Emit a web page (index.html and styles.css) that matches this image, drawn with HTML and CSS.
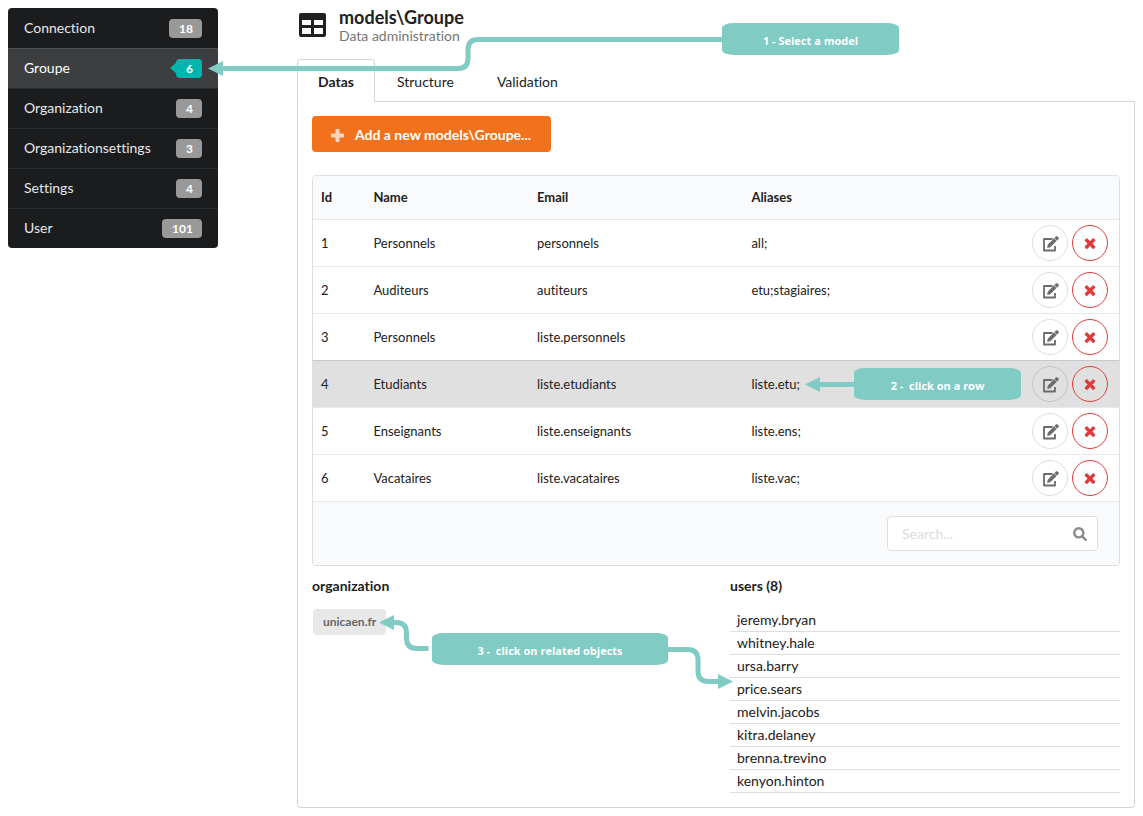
FILE: index.html
```html
<!DOCTYPE html>
<html lang="en">
<head>
<meta charset="utf-8">
<title>Data administration</title>
<link rel="stylesheet" href="styles.css">
</head>
<body>
<svg class="defs" aria-hidden="true">
  <symbol id="edit" viewBox="0 0 16 16"><path d="M9.500 3H1V14.500H12V10" fill="none" stroke="currentColor" stroke-width="1.800" stroke-linejoin="round"/><path d="M5.200 8.600L11 2.800L13.200 5L7.400 10.800L4.600 11.400ZM11.700 2.100L13 .800Q13.700 .200 14.400 .800L15.200 1.600Q15.800 2.300 15.200 3L13.900 4.300Z" fill="currentColor" stroke="currentColor" stroke-width=".8"/></symbol>
  <symbol id="remove" viewBox="0 0 1792 1792"><path d="M1490 1322q0 40-28 68l-136 136q-28 28-68 28t-68-28l-294-294-294 294q-28 28-68 28t-68-28l-136-136q-28-28-28-68t28-68l294-294-294-294q-28-28-28-68t28-68l136-136q28-28 68-28t68 28l294 294 294-294q28-28 68-28t68 28l136 136q28 28 28 68t-28 68l-294 294 294 294q28 28 28 68z"/></symbol>
</svg>
<div class="page">
  <nav class="menu">
    <a class="item" href="#connection">Connection <span class="count">18</span></a>
    <a class="item active" href="#groupe">Groupe <span class="count pointing">6</span></a>
    <a class="item" href="#organization">Organization <span class="count">4</span></a>
    <a class="item" href="#organizationsettings">Organizationsettings <span class="count">3</span></a>
    <a class="item" href="#settings">Settings <span class="count">4</span></a>
    <a class="item" href="#user">User <span class="count">101</span></a>
  </nav>
  <main class="main">
    <header class="header">
      <svg class="table-icon" viewBox="0 0 27 24"><path fill-rule="evenodd" d="M2 0h23a2 2 0 0 1 2 2v20a2 2 0 0 1-2 2H2a2 2 0 0 1-2-2V2a2 2 0 0 1 2-2zM3 7v5h9V7zM15 7v5h9V7zM3 15v6h9v-6zM15 15v6h9v-6z"/></svg>
      <div>
        <h1 class="title">models\Groupe</h1>
        <p class="subtitle">Data administration</p>
      </div>
    </header>
    <div class="tabs" role="tablist">
      <button class="tab selected" role="tab" aria-selected="true">Datas</button>
      <button class="tab" role="tab" aria-selected="false">Structure</button>
      <button class="tab" role="tab" aria-selected="false">Validation</button>
    </div>
    <section class="panel">
      <button class="add"><svg class="plus" viewBox="0 0 13 13"><path d="M5.500 0h2a1 1 0 0 1 1 1v3.500H12a1 1 0 0 1 1 1v2a1 1 0 0 1-1 1H8.500V12a1 1 0 0 1-1 1h-2a1 1 0 0 1-1-1V8.500H1a1 1 0 0 1-1-1v-2a1 1 0 0 1 1-1h3.500V1a1 1 0 0 1 1-1z"/></svg>Add a new models\Groupe...</button>
      <div class="table-box">
        <table class="table">
          <colgroup><col class="col-id"><col class="col-name"><col class="col-email"><col></colgroup>
          <thead><tr><th>Id</th><th>Name</th><th>Email</th><th colspan="2">Aliases</th></tr></thead>
          <tbody>
            <tr><td>1</td><td>Personnels</td><td>personnels</td><td>all;</td><td class="actions"><button class="round" aria-label="Edit"><svg class="edit"><use href="#edit"/></svg></button><button class="round danger" aria-label="Delete"><svg class="remove"><use href="#remove"/></svg></button></td></tr>
            <tr><td>2</td><td>Auditeurs</td><td>autiteurs</td><td>etu;stagiaires;</td><td class="actions"><button class="round" aria-label="Edit"><svg class="edit"><use href="#edit"/></svg></button><button class="round danger" aria-label="Delete"><svg class="remove"><use href="#remove"/></svg></button></td></tr>
            <tr><td>3</td><td>Personnels</td><td>liste.personnels</td><td></td><td class="actions"><button class="round" aria-label="Edit"><svg class="edit"><use href="#edit"/></svg></button><button class="round danger" aria-label="Delete"><svg class="remove"><use href="#remove"/></svg></button></td></tr>
            <tr class="current"><td>4</td><td>Etudiants</td><td>liste.etudiants</td><td>liste.etu;</td><td class="actions"><button class="round" aria-label="Edit"><svg class="edit"><use href="#edit"/></svg></button><button class="round danger" aria-label="Delete"><svg class="remove"><use href="#remove"/></svg></button></td></tr>
            <tr><td>5</td><td>Enseignants</td><td>liste.enseignants</td><td>liste.ens;</td><td class="actions"><button class="round" aria-label="Edit"><svg class="edit"><use href="#edit"/></svg></button><button class="round danger" aria-label="Delete"><svg class="remove"><use href="#remove"/></svg></button></td></tr>
            <tr><td>6</td><td>Vacataires</td><td>liste.vacataires</td><td>liste.vac;</td><td class="actions"><button class="round" aria-label="Edit"><svg class="edit"><use href="#edit"/></svg></button><button class="round danger" aria-label="Delete"><svg class="remove"><use href="#remove"/></svg></button></td></tr>
          </tbody>
        </table>
        <div class="table-footer">
          <label class="search">
            <input class="search-input" type="text" placeholder="Search..." aria-label="Search">
            <svg class="search-icon" viewBox="0 0 14 14"><circle cx="5.800" cy="5.800" r="4.600"/><path d="M9.300 9.300l3.500 3.500"/></svg>
          </label>
        </div>
      </div>
      <div class="related">
        <section>
          <h2 class="related-title">organization</h2>
          <a class="tag" href="#unicaen">unicaen.fr</a>
        </section>
        <section>
          <h2 class="related-title">users (8)</h2>
          <ul class="users">
            <li><a class="user" href="#u1">jeremy.bryan</a></li>
            <li><a class="user" href="#u2">whitney.hale</a></li>
            <li><a class="user" href="#u3">ursa.barry</a></li>
            <li><a class="user" href="#u4">price.sears</a></li>
            <li><a class="user" href="#u5">melvin.jacobs</a></li>
            <li><a class="user" href="#u6">kitra.delaney</a></li>
            <li><a class="user" href="#u7">brenna.trevino</a></li>
            <li><a class="user" href="#u8">kenyon.hinton</a></li>
          </ul>
        </section>
      </div>
    </section>
  </main>
</div>
<svg class="arrows" viewBox="0 0 1143 816" aria-hidden="true">
  <path class="line" d="M722 39.500H478Q468 39.500 468 49.500V58.500Q468 68.500 458 68.500H222"/>
  <path class="head" d="M208 68.500l15-7.500v15z"/>
  <path class="line" d="M855 384.500H819"/>
  <path class="head" d="M805 384.500l15-7.500v15z"/>
  <path class="line" d="M428.500 648.500H417Q406.500 648.500 406.500 638V633Q406.500 622.500 396 622.500H393"/>
  <path class="head" d="M379 622.500l15-7.500v15z"/>
  <path class="line" d="M668 649.500H687.500Q698 649.500 698 660V671Q698 681.500 708.500 681.500H719"/>
  <path class="head" d="M733 681.500l-15-7.500v15z"/>
</svg>
<div class="callout step-one">1 - Select a model</div>
<div class="callout step-two">2 -&nbsp; click on a row</div>
<div class="callout step-three">3 -&nbsp; click on related objects</div>
</body>
</html>
```
FILE: styles.css
```css
* { box-sizing: border-box; }
body {
  margin: 0;
  position: relative;
  background: #fff;
  color: #212121;
  font: 14px/20px Lato, "Liberation Sans", sans-serif;
  font-variant-ligatures: none;
}
a { color: inherit; text-decoration: none; }
button { font: inherit; font-variant-ligatures: none; color: inherit; cursor: pointer; }
h1, h2, p, ul { margin: 0; padding: 0; }
.defs { display: none; }
.page {
  display: grid;
  grid-template-columns: 210px 1fr;
  gap: 79px;
  align-items: start;
  padding: 8px;
}

.menu { background: #1b1c1d; border-radius: 4px; overflow: hidden; }
.item {
  display: flex;
  justify-content: space-between;
  height: 40px;
  padding: 9px 16px 0;
  color: #e8e8e8;
  border-top: 1px solid #2d2e2f;
}
.item:first-child { border-top-color: transparent; }
.item.active { background: #3d3e3f; color: #fff; border-top-color: #4d4e4f; }
.count {
  position: relative;
  height: 19px;
  margin-top: 1px;
  padding: 1px 9px 0 10px;
  border-radius: 4px;
  background: #999;
  color: #fff;
  font-size: 12px;
  font-weight: 700;
  line-height: 18px;
}
.pointing { background: #00b5ad; }
.pointing::before {
  content: "";
  position: absolute;
  left: -6px;
  top: 3px;
  border: 6px solid transparent;
  border-left-width: 0;
  border-right: 7px solid #00b5ad;
}

.header { display: flex; gap: 13px; padding: 0 0 13px 2px; }
.table-icon { width: 27px; height: 24px; margin-top: 5px; fill: #212121; }
.title { font-size: 18px; line-height: 18px; font-weight: 700; }
.subtitle { line-height: 20px; color: #767676; }
.tabs { display: flex; gap: 1px; margin-bottom: -1px; }
.tab {
  height: 43px;
  padding: 2px 20px 0;
  border: 1px solid transparent;
  background: none;
}
.selected {
  position: relative;
  background: #fff;
  border-color: #d4d4d5;
  border-bottom-color: #fff;
  border-radius: 4px 4px 0 0;
  font-weight: 700;
}
.panel { padding: 14px; border: 1px solid #d4d4d5; border-radius: 0 0 4px 4px; }
.add {
  display: flex;
  align-items: center;
  gap: 11px;
  height: 36px;
  padding: 2px 20px 0 19px;
  border: 0;
  border-radius: 4px;
  background: #f2711c;
  color: #fff;
  font-weight: 700;
}
.plus { width: 13px; height: 13px; fill: #fbd5bd; }

.table-box {
  margin-top: 23px;
  border: 1px solid #dededf;
  border-radius: 4px;
  overflow: hidden;
}
.table { width: 100%; border-collapse: separate; border-spacing: 0; table-layout: fixed; font-size: 13px; }
.col-id { width: 6.5%; }
.col-name { width: 20.3%; }
.col-email { width: 26.6%; }
.table th {
  height: 44px;
  padding: 0 8px 2px;
  background: #f9fafb;
  border-bottom: 1px solid #e4e4e5;
  text-align: left;
  font-weight: 700;
}
.table td { height: 47px; padding: 0 8px; border-bottom: 1px solid #e8e8e9; }
.current td { background: #e0e0e0; box-shadow: 0 -1px #c8c8c8; }
.table .actions { text-align: right; padding-right: 11px; white-space: nowrap; }
.round {
  display: inline-flex;
  align-items: center;
  justify-content: center;
  width: 36px;
  height: 36px;
  margin-left: 4px;
  padding: 0;
  border: 1px solid rgba(34, 36, 38, 0.15);
  border-radius: 50%;
  background: none;
  color: #6b6b6b;
  vertical-align: middle;
}
.danger { border-color: #e03b3b; }
.edit { width: 16px; height: 16px; margin: 2px 0 0 2px; }
.remove { width: 16px; height: 16px; fill: #e03b3b; }
.table-footer {
  display: flex;
  justify-content: flex-end;
  padding: 14px 21px 14px 8px;
  background: #f9fafb;
}
.search { position: relative; width: 211px; }
.search-input {
  display: block;
  width: 100%;
  height: 35px;
  padding: 0 36px 1px 14px;
  border: 1px solid #dededf;
  border-radius: 4px;
  background: #fff;
  font: inherit;
}
.search-input::placeholder { color: #dcdcdc; opacity: 1; }
.search-icon {
  position: absolute;
  right: 11px;
  top: 11px;
  width: 14px;
  height: 14px;
  fill: none;
  stroke: #8b8b8b;
  stroke-width: 2.4;
  stroke-linecap: round;
}

.related { display: grid; grid-template-columns: 1fr 1fr; gap: 28px; padding-top: 10px; }
.related-title { font-size: 14px; line-height: 20px; font-weight: 700; }
.tag {
  display: inline-block;
  margin: 13px 0 0 1px;
  padding: 0 10px;
  border-radius: 4px;
  background: #e8e8e8;
  color: #666;
  font-size: 12px;
  font-weight: 700;
  line-height: 26px;
}
.users { margin-top: 13px; list-style: none; }
.user { display: block; padding: 1px 7px; border-bottom: 1px solid #dededf; }

.arrows { position: absolute; left: 0; top: 0; width: 1143px; height: 816px; pointer-events: none; }
.line { fill: none; stroke: #80cbc4; stroke-width: 5; }
.head { fill: #80cbc4; }
.callout {
  position: absolute;
  height: 32px;
  padding-top: 4px;
  border-radius: 12px / 5px;
  background: #80cbc4;
  color: #fff;
  font: 700 11px/28px "Open Sans", "Noto Sans", sans-serif;
  text-align: center;
}
.step-one { left: 722px; top: 23px; width: 177px; }
.step-two { left: 854px; top: 368px; width: 167px; }
.step-three { left: 432px; top: 633px; width: 236px; }
```
